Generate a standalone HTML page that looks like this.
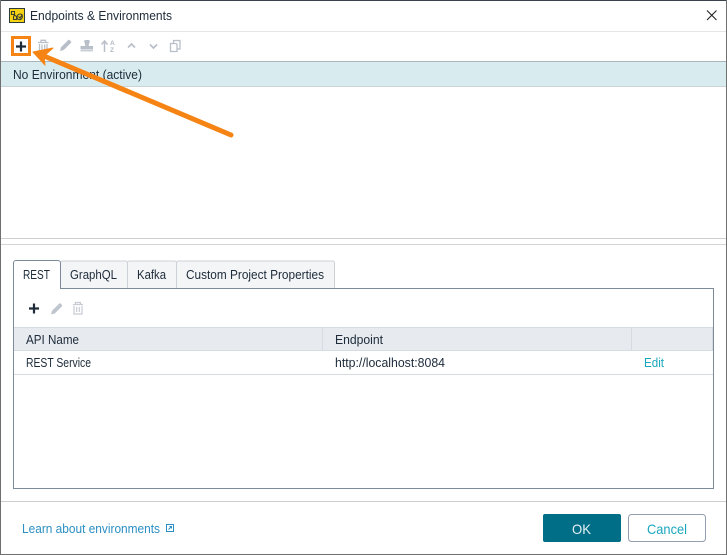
<!DOCTYPE html>
<html><head><meta charset="utf-8"><style>
html,body{margin:0;padding:0;background:#fff;width:727px;height:555px;overflow:hidden}
svg{display:block}
text{font-family:"Liberation Sans",sans-serif;font-size:12.5px;fill:#1d2b3a}
</style></head><body>
<svg width="727" height="555" viewBox="0 0 727 555" xmlns="http://www.w3.org/2000/svg">
<rect width="727" height="555" fill="#fff"/>
<!-- window frame -->
<rect x="0" y="0" width="727" height="1" fill="#39424a"/>
<rect x="0" y="0" width="1" height="555" fill="#6f6f6f"/>
<rect x="726" y="0" width="1" height="555" fill="#6f6f6f"/>
<rect x="0" y="554" width="727" height="1" fill="#6f6f6f"/>
<!-- title icon -->
<rect x="9.500" y="8.500" width="15" height="14" fill="#f6d312" stroke="#2c3a3a"/>
<path d="M11.500 11.500h3v3h-3zM14.500 15l2 1.500v3h-3v-3zM17 18.500c1.500 1.500 4 1.500 5-.5s0-4-2-4-3 1.500-3 4.500M18.500 16.500l1.500 1.500 2.500-3.500" fill="none" stroke="#3a4030" stroke-width="1.100"/>
<text x="30" y="20" textLength="142" lengthAdjust="spacingAndGlyphs">Endpoints &amp; Environments</text>
<path d="M707 10.500l9.500 9.500M716.500 10.500l-9.500 9.500" stroke="#222" stroke-width="1.100" fill="none"/>
<rect x="1" y="31" width="725" height="1" fill="#e6e6e6"/>
<!-- toolbar icons disabled -->
<g fill="none" stroke="#b8bfc9" stroke-width="1.300">
<path d="M38 42.500h10.500M41 42v-1.700h4.500V42M39.500 44v7.500h7.500V44M42 44.500v5.500M44.700 44.500v5.500"/>
<path d="M128 47.500l3.500-3.500 3.500 3.500M150 44.500l3.500 3.500 3.500-3.500" stroke-width="1.700"/>
<path d="M104.500 52V41M101.500 44.500l3-3.500 3 3.500" stroke-width="1.500"/>
<rect x="173.500" y="40.500" width="6.500" height="8.500"/><path d="M176 43.500h-5.500v8h6.500v-7z" fill="#fff"/>
</g>
<path d="M60 51l1-3.800 7-7c.6-.6 1.200-.6 1.800 0l1 1c.6.6.6 1.200 0 1.800l-7 7z" fill="#b8bfc9"/>
<path d="M84.500 40h4c.8 0 1.300.6 1.300 1.400 0 1.500-1.300 2.600-1 4.600h4.200v3.500H80.500V46h4.700c.3-2-1-3.100-1-4.600 0-.8.500-1.400 1.300-1.400z" fill="#b8bfc9"/>
<rect x="80.500" y="50" width="12.500" height="1.400" fill="#c8ced6"/>
<text x="110" y="45" style="font-size:6.500px;font-weight:bold;fill:#b0b7c2">A</text>
<text x="110" y="52" style="font-size:6.500px;font-weight:bold;fill:#b0b7c2">Z</text>
<!-- selected row -->
<rect x="1" y="61" width="725" height="26" fill="#d8ecef"/>
<rect x="1" y="61" width="725" height="1" fill="#aab4bc"/>
<rect x="1" y="86" width="725" height="1" fill="#c9d3d8"/>
<text x="13" y="79" textLength="129" lengthAdjust="spacingAndGlyphs">No Environment (active)</text>
<!-- splitter -->
<rect x="1" y="238" width="725" height="1" fill="#cfcfcf"/>
<rect x="1" y="244" width="725" height="1" fill="#d4d4d4"/>
<!-- panel -->
<rect x="13.500" y="288.500" width="700" height="200" fill="#fff" stroke="#7d8a9a"/>
<!-- tabs -->
<path d="M60.500 288.500V263a2 2 0 0 1 2-2h63a2 2 0 0 1 2 2v25.500z" fill="#f4f5f7" stroke="#ccd1d8"/>
<path d="M127.500 288.500V263a2 2 0 0 1 2-2h45a2 2 0 0 1 2 2v25.500z" fill="#f4f5f7" stroke="#ccd1d8"/>
<path d="M176.500 288.500V263a2 2 0 0 1 2-2h154a2 2 0 0 1 2 2v25.500z" fill="#f4f5f7" stroke="#ccd1d8"/>
<rect x="60" y="288" width="654" height="1" fill="#7d8a9a"/>
<path d="M13.500 289V263a2.500 2.500 0 0 1 2.500-2.500h42a2.500 2.500 0 0 1 2.500 2.500v26" fill="#fff" stroke="#7d8a9a"/>
<rect x="14" y="287" width="46" height="3" fill="#fff"/>
<text x="23" y="279" textLength="27" lengthAdjust="spacingAndGlyphs">REST</text>
<text x="70" y="279" textLength="47" lengthAdjust="spacingAndGlyphs">GraphQL</text>
<text x="137" y="279" textLength="29" lengthAdjust="spacingAndGlyphs">Kafka</text>
<text x="186" y="279" textLength="138" lengthAdjust="spacingAndGlyphs">Custom Project Properties</text>
<!-- panel toolbar -->
<path d="M29 308.500h10M34 303.500v10" stroke="#1e2a38" stroke-width="2.200" fill="none"/>
<path d="M51 314.500l1-3.800 7-7c.6-.6 1.200-.6 1.800 0l1 1c.6.6.6 1.200 0 1.800l-7 7z" fill="#c0c6d0"/>
<g fill="none" stroke="#c6ccd4" stroke-width="1.200"><path d="M73 304.500h10M75.500 304v-1.500h5v1.500M74 306v8h8v-8M76.700 307v5M79.300 307v5"/></g>
<!-- table -->
<rect x="14" y="327" width="699" height="24" fill="#e7eaef"/>
<rect x="14" y="327" width="699" height="1" fill="#d6dbe1"/>
<rect x="14" y="350" width="699" height="1" fill="#d6dbe1"/>
<rect x="322" y="328" width="1" height="22" fill="#d6dbe1"/>
<rect x="631" y="328" width="1" height="22" fill="#d6dbe1"/>
<rect x="712" y="328" width="1" height="22" fill="#d6dbe1"/>
<rect x="14" y="374" width="699" height="1" fill="#d6dbe1"/>
<text x="26" y="344" textLength="53" lengthAdjust="spacingAndGlyphs">API Name</text>
<text x="335" y="344" textLength="48" lengthAdjust="spacingAndGlyphs">Endpoint</text>
<text x="26" y="367" textLength="65" lengthAdjust="spacingAndGlyphs">REST Service</text>
<text x="335" y="367" textLength="110" lengthAdjust="spacingAndGlyphs">http://localhost:8084</text>
<text x="644" y="367" textLength="20" lengthAdjust="spacingAndGlyphs" style="fill:#1aa7bd">Edit</text>
<!-- footer -->
<rect x="1" y="501" width="725" height="1" fill="#cdcdcd"/>
<text x="22" y="533" textLength="138" lengthAdjust="spacingAndGlyphs" style="fill:#2b8fc4">Learn about environments</text>
<rect x="166.500" y="524.500" width="7" height="7" fill="none" stroke="#2b8fc4"/>
<path d="M168.500 529.500l3-3M169.500 526.500h2v2" fill="none" stroke="#2b8fc4"/>
<rect x="543" y="514" width="78" height="28" rx="2" fill="#006e87"/>
<text x="572" y="534" textLength="19" lengthAdjust="spacingAndGlyphs" style="font-size:14px;fill:#e6f1f4">OK</text>
<rect x="628.500" y="514.500" width="77" height="27" rx="3" fill="#fff" stroke="#939eb0"/>
<text x="647" y="534" textLength="40" lengthAdjust="spacingAndGlyphs" style="font-size:14px;fill:#1aa7bd">Cancel</text>
<!-- plus with orange highlight -->
<path d="M16 46.500h10M21 41.500v10" stroke="#1e2a38" stroke-width="2.200" fill="none"/>
<rect x="12.500" y="37.500" width="17" height="17" fill="none" stroke="#f58415" stroke-width="3"/>
<!-- arrow -->
<path d="M231 135L44 56" stroke="#f58415" stroke-width="5" fill="none" stroke-linecap="round"/>
<path d="M33 52L53 48L44 56L45 65Z" fill="#f58415" stroke="#f58415" stroke-linejoin="round"/>
</svg>
</body></html>
